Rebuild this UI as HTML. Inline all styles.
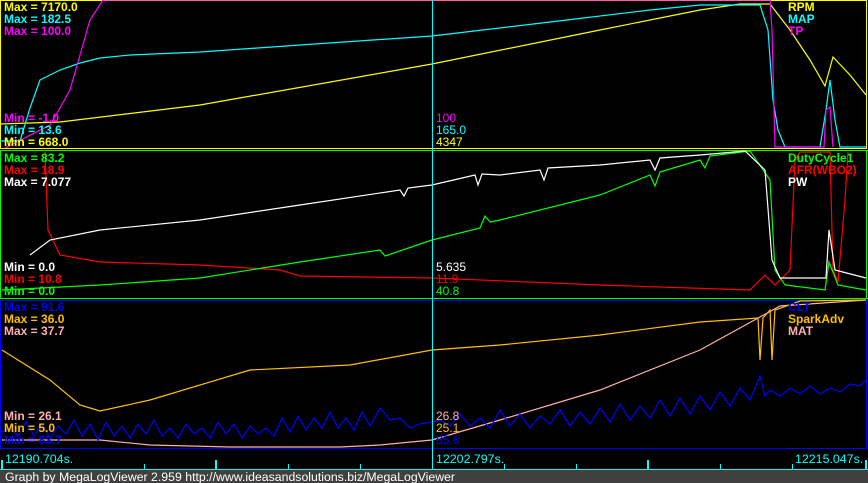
<!DOCTYPE html>
<html><head><meta charset="utf-8"><style>
html,body{margin:0;padding:0;background:#000;width:868px;height:483px;overflow:hidden}
svg{display:block}
text{font-family:"Liberation Sans",sans-serif;font-size:12px}
.b{font-weight:bold}
</style></head><body>
<svg width="868" height="483" viewBox="0 0 868 483" xmlns="http://www.w3.org/2000/svg">
<rect width="868" height="483" fill="#000"/>
<rect x="0.5" y="0.5" width="866" height="148" fill="none" stroke="#ffff00"/>
<line x1="0" y1="150.5" x2="868" y2="150.5" stroke="#00ff00"/>
<line x1="0.5" y1="150" x2="0.5" y2="299" stroke="#00ff00"/>
<line x1="866.5" y1="150" x2="866.5" y2="299" stroke="#00ff00"/>
<line x1="0" y1="298.5" x2="868" y2="298.5" stroke="#00ff00"/>
<line x1="0" y1="300.5" x2="868" y2="300.5" stroke="#0000ff"/>
<line x1="0.5" y1="300" x2="0.5" y2="449" stroke="#0000ff"/>
<line x1="866.5" y1="300" x2="866.5" y2="449" stroke="#0000ff"/>
<line x1="0" y1="448.5" x2="868" y2="448.5" stroke="#0000ff"/>

<g fill="none" stroke-width="1.2">
<polyline stroke="#ffff00" points="0,124 60,122 200,105 432,64 600,30 700,10 740,4 770,4 790,30 810,60 825,86 833,57 850,75 866,95"/>
<polyline stroke="#00ffff" points="0,141 20,141 30,108 40,80 60,70 80,63 100,58 130,55 200,52 300,45 432,36 550,22 650,10 700,5 760,5 768,30 773,100 778,130 785,147 820,147 826,110 830,80 835,120 840,147 866,147"/>
<polyline stroke="#ff00ff" points="5,148 50,125 60,108 70,90 80,55 90,20 103,0 770,0 772,30 775,147 824,147 826,110 830,107 833,147"/>
<polyline stroke="#ff0000" points="45,152 48,230 60,255 100,262 200,265 280,270 300,276 432,278 600,285 750,290 765,275 775,285 790,270 795,160 800,152 830,152 833,270 838,282 845,200 848,152"/>
<polyline stroke="#00ff00" points="2,290 100,285 200,278 300,262 380,250 385,256 432,240 480,228 485,216 490,222 500,220 600,195 650,175 655,186 660,172 700,160 705,168 710,156 750,151 770,180 775,270 785,285 825,290 829,262 838,285 866,290"/>
<polyline stroke="#ffffff" points="30,255 50,240 100,230 200,220 300,205 400,190 404,196 408,188 432,185 475,175 478,185 482,174 500,175 540,170 544,180 548,168 600,165 650,160 655,170 660,158 700,155 745,151 765,170 772,260 780,278 826,278 829,230 835,270 866,278"/>
<polyline stroke="#ffafaf" points="2,440 100,440 150,445 230,447 340,447 380,445 432,440 500,420 600,390 700,350 780,306 866,300"/>
<polyline stroke="#ffc000" points="2,350 50,380 80,405 100,411 150,400 250,370 350,365 432,350 500,345 600,335 700,322 758,318 760,360 763,318 770,310 772,360 775,310 800,301 866,300"/>
<polyline stroke="#0000ff" points="2,432 10,428 18,436 26,422 34,436 42,424 50,438 58,426 66,434 74,420 82,436 90,424 98,440 106,422 114,436 122,426 130,438 138,424 146,434 154,420 162,436 170,428 178,438 186,424 194,434 202,428 210,438 218,422 226,434 234,424 242,438 250,426 258,434 266,428 274,436 282,418 290,432 298,416 306,430 314,418 322,428 330,412 338,428 346,418 354,430 362,412 370,426 380,408 390,420 400,418 410,428 420,424 432,422 440,420 450,426 460,414 470,426 480,418 490,428 500,410 510,426 520,414 530,428 540,416 550,424 560,410 570,426 580,412 590,424 600,408 610,422 620,404 630,420 640,406 650,418 660,400 670,416 680,398 690,414 700,396 710,410 720,392 730,406 740,388 750,400 760,376 765,396 770,390 780,396 790,388 800,394 810,386 820,394 830,388 840,392 850,384 860,386 866,380"/>
</g>

<line x1="432.5" y1="0" x2="432.5" y2="470" stroke="#00ffff"/>

<line x1="0" y1="469.5" x2="868" y2="469.5" stroke="#00ffff"/>
<g stroke="#00ffff" stroke-width="2">
<line x1="2" y1="460" x2="2" y2="469"/><line x1="216" y1="460" x2="216" y2="469"/><line x1="648" y1="460" x2="648" y2="469"/><line x1="866" y1="460" x2="866" y2="469"/>
</g>
<g stroke="#00ffff">
<line x1="144.5" y1="464" x2="144.5" y2="469"/><line x1="288.5" y1="464" x2="288.5" y2="469"/><line x1="360.5" y1="464" x2="360.5" y2="469"/><line x1="504.5" y1="464" x2="504.5" y2="469"/><line x1="576.5" y1="464" x2="576.5" y2="469"/><line x1="720.5" y1="464" x2="720.5" y2="469"/><line x1="792.5" y1="464" x2="792.5" y2="469"/>
</g>
<text x="5" y="463" fill="#00ffff" style="font-size:12.4px">12190.704s.</text>
<text x="436" y="463" fill="#00ffff" style="font-size:12.4px">12202.797s.</text>
<text x="795" y="463" fill="#00ffff" style="font-size:12.4px">12215.047s.</text>
<rect x="0" y="470" width="868" height="13" fill="#404040"/>
<text x="5" y="481" fill="#ffffff" style="font-size:12.3px">Graph by MegaLogViewer 2.959 http://www.ideasandsolutions.biz/MegaLogViewer</text>

<text x="4" y="11" fill="#ffff00" class="b">Max = 7170.0</text>
<text x="4" y="23" fill="#00ffff" class="b">Max = 182.5</text>
<text x="4" y="35" fill="#ff00ff" class="b">Max = 100.0</text>
<text x="4" y="122" fill="#ff00ff" class="b">Min = -1.0</text>
<text x="4" y="134" fill="#00ffff" class="b">Min = 13.6</text>
<text x="4" y="146" fill="#ffff00" class="b">Min = 668.0</text>
<text x="788" y="11" fill="#ffff00" class="b">RPM</text>
<text x="788" y="23" fill="#00ffff" class="b">MAP</text>
<text x="788" y="35" fill="#ff00ff" class="b">TP</text>

<text x="4" y="162" fill="#00ff00" class="b">Max = 83.2</text>
<text x="4" y="174" fill="#ff0000" class="b">Max = 18.9</text>
<text x="4" y="186" fill="#ffffff" class="b">Max = 7.077</text>
<text x="4" y="271" fill="#ffffff" class="b">Min = 0.0</text>
<text x="4" y="283" fill="#ff0000" class="b">Min = 10.8</text>
<text x="4" y="295" fill="#00ff00" class="b">Min = 0.0</text>
<text x="788" y="162" fill="#00ff00" class="b">DutyCycle1</text>
<text x="788" y="174" fill="#ff0000" class="b">AFR(WBO2)</text>
<text x="788" y="186" fill="#ffffff" class="b">PW</text>

<text x="4" y="311" fill="#0000ff" class="b">Max = 91.6</text>
<text x="4" y="323" fill="#ffc000" class="b">Max = 36.0</text>
<text x="4" y="335" fill="#ffafaf" class="b">Max = 37.7</text>
<text x="4" y="420" fill="#ffafaf" class="b">Min = 26.1</text>
<text x="4" y="432" fill="#ffc000" class="b">Min = 5.0</text>
<text x="4" y="444" fill="#0000ff" class="b">Min = 83.7</text>
<text x="788" y="311" fill="#0000ff" class="b">CLT</text>
<text x="788" y="323" fill="#ffc000" class="b">SparkAdv</text>
<text x="788" y="335" fill="#ffafaf" class="b">MAT</text>

<text x="436" y="122" fill="#ff00ff">100</text>
<text x="436" y="134" fill="#00ffff">165.0</text>
<text x="436" y="146" fill="#ffff00">4347</text>
<text x="436" y="271" fill="#ffffff">5.635</text>
<text x="436" y="283" fill="#ff0000">11.9</text>
<text x="436" y="295" fill="#00ff00">40.8</text>
<text x="436" y="420" fill="#ffafaf">26.8</text>
<text x="436" y="432" fill="#ffc000">25.1</text>
<text x="436" y="444" fill="#0000ff">85.8</text>
</svg>
</body></html>
